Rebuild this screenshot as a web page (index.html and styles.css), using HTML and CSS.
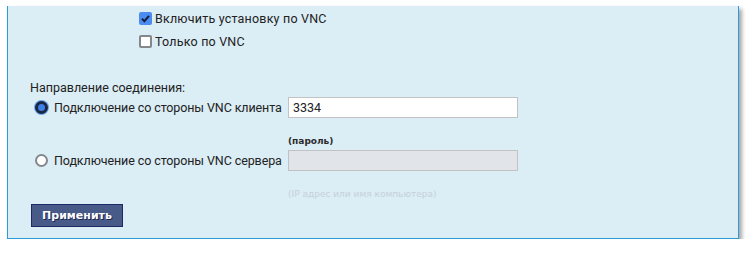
FILE: index.html
```html
<!DOCTYPE html>
<html lang="ru">
<head>
    <meta charset="UTF-8">
    <link rel="stylesheet" href="styles.css">
    <title>VNC</title>
</head>
<body>
    <div class="panel">
        <div class="opts">
            <label class="check">
                <span class="box on"><svg width="13" height="13" viewBox="0 0 13 13"><path d="M3 6.8 L5.4 9.2 L10 3.8" fill="none" stroke="#14203a" stroke-width="2"/></svg></span>
                Включить установку по VNC
            </label>
            <label class="check">
                <span class="box"></span>
                Только по VNC
            </label>
        </div>

        <div class="dir-title">Направление соединения:</div>
        <div class="dir">
            <label class="radio"><span class="dot on"></span>Подключение со стороны VNC клиента</label>
            <div class="field"><input type="text" class="text" value="3334"></div>

            <label class="radio low"><span class="dot"></span>Подключение со стороны VNC сервера</label>
            <div class="field">
                <span class="small">(пароль)</span>
                <input type="text" class="text" disabled>
            </div>

            <div></div>
            <div class="hint">(IP адрес или имя компьютера)</div>
        </div>

        <button class="apply">Применить</button>
    </div>
</body>
</html>
```

FILE: styles.css
```css
body {
    margin: 0;
    background-color: #fff;
    font-family: Roboto, "Liberation Sans", sans-serif;
    font-size: 12.5px;
    color: #222;
}

.panel {
    box-sizing: border-box;
    width: 732px;
    height: 233px;
    margin: 6px 0 0 7px;
    border: 1px solid #2b9bd6;
    border-top: none;
    background-color: #dbedf5;
    box-shadow: 3px 3px 4px rgba(0, 0, 0, 0.35);
}

.opts {
    padding: 1px 0 0 131px;
}

.check {
    display: flex;
    align-items: center;
    height: 23px;
    gap: 3px;
    white-space: nowrap;
    letter-spacing: 0.2px;
}

.box {
    box-sizing: border-box;
    width: 13px;
    height: 13px;
    border: 2px solid #84878c;
    border-radius: 2px;
    background-color: #fff;
}

.box.on {
    border: none;
    background-color: #4a8cf2;
}

.box svg {
    display: block;
}

.dir-title {
    margin: 27px 0 0 22px;
    line-height: 16px;
}

.dir {
    display: grid;
    grid-template-columns: 253px 230px;
    margin: 1px 0 0 27px;
}

.radio {
    display: flex;
    align-items: center;
    gap: 6px;
    height: 21px;
    white-space: nowrap;
    letter-spacing: -0.1px;
}

.radio.low {
    align-self: end;
}

.dot {
    flex: none;
    box-sizing: border-box;
    width: 13px;
    height: 13px;
    border: 2px solid #84878c;
    border-radius: 50%;
    background-color: #fff;
}

.dot.on {
    border: 3px solid #1b2740;
    background-color: #3d7fe6;
    box-shadow: 0 0 0 1px #69a5f2;
}

.field {
    display: flex;
    flex-direction: column;
}

.text {
    box-sizing: border-box;
    width: 230px;
    height: 21px;
    margin: 0;
    padding: 0 4px;
    border: 1px solid #c2c2c2;
    background-color: #fff;
    font-family: Roboto, "Liberation Sans", sans-serif;
    font-size: 12.5px;
    color: #222;
    outline: none;
}

.text:disabled {
    background-color: #e1e4e9;
}

.small {
    margin: 16px 0 2px;
    line-height: 14px;
    font-family: "DejaVu Sans", Verdana, sans-serif;
    font-size: 9px;
    font-weight: bold;
    color: #2a2a2a;
}

.hint {
    margin-top: 16px;
    line-height: 14px;
    font-family: "DejaVu Sans", Verdana, sans-serif;
    font-size: 9px;
    color: #c6d1da;
}

.apply {
    display: block;
    box-sizing: border-box;
    width: 92px;
    height: 23px;
    margin: 3px 0 0 23px;
    padding: 0;
    border: 1px solid #1d2a66;
    background-color: #485b88;
    color: #fff;
    font-family: "DejaVu Sans", Verdana, sans-serif;
    font-size: 11px;
    font-weight: bold;
    text-shadow: 1px 1px 0 #1d2550;
    cursor: pointer;
}
```
